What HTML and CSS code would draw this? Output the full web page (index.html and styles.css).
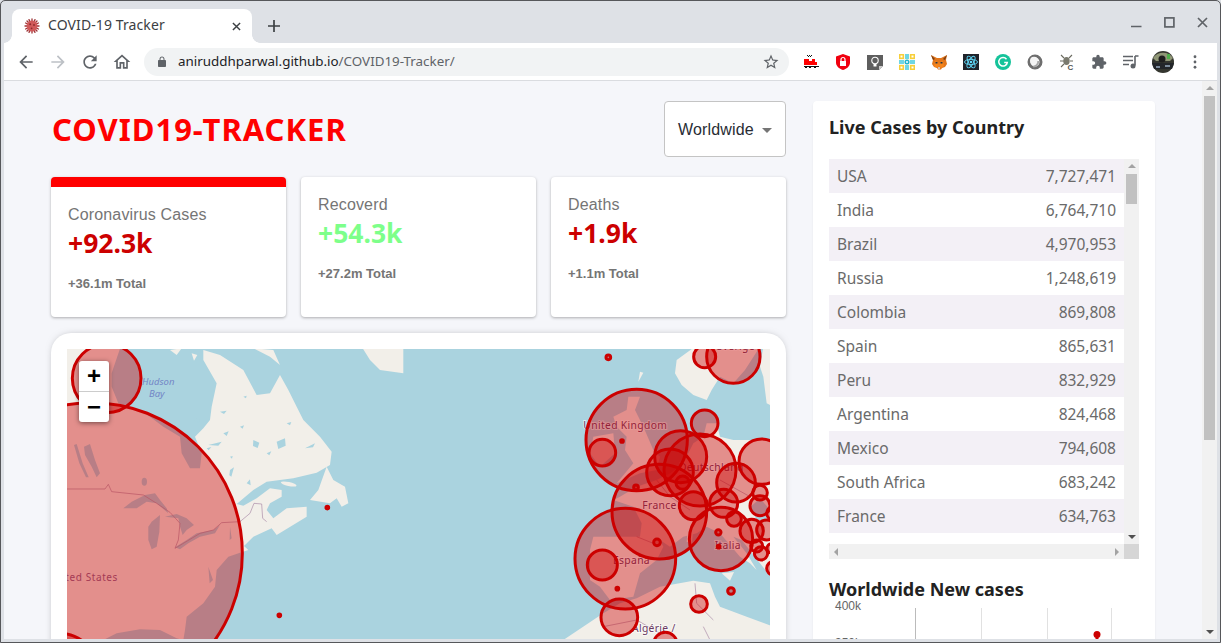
FILE: index.html

```html
<!DOCTYPE html>
<html lang="en">
<head>
  <meta charset="UTF-8">
  <title>COVID-19 Tracker</title>
  <link rel="stylesheet" href="styles.css">
</head>
<body>
<div class="window">

  <div class="tabbar">
    <div class="tab">
      <svg class="favicon" viewBox="0 0 16 16">
        <g stroke="#9c3336" stroke-width="1.3" stroke-linecap="round">
          <path d="M8 1v14M1 8h14M3 3l10 10M13 3L3 13M5 1.600l6 12.800M11 1.600L5 14.400M1.600 5l12.800 6M14.400 5L1.600 11"/>
        </g>
        <circle cx="8" cy="8" r="5.500" fill="#d0595a"/>
        <circle cx="6.200" cy="6.200" r="1" fill="#8c2a2a"/>
        <circle cx="10" cy="7" r=".9" fill="#8c2a2a"/>
        <circle cx="7.600" cy="10.300" r=".9" fill="#8c2a2a"/>
      </svg>
      <span class="tab-title">COVID-19 Tracker</span>
      <svg class="tab-close" viewBox="0 0 10 10"><path d="M1 1l8 8M9 1L1 9" stroke="#3c4043" stroke-width="1.600"/></svg>
    </div>
    <svg class="new-tab" viewBox="0 0 12 12"><path d="M6 0v12M0 6h12" stroke="#3c4043" stroke-width="1.700"/></svg>
    <div class="win-controls">
      <svg viewBox="0 0 11 11"><path d="M0 9.500h10.500" stroke="#5f6368" stroke-width="1.600"/></svg>
      <svg viewBox="0 0 11 11"><rect x=".9" y=".9" width="9" height="9" fill="none" stroke="#5f6368" stroke-width="1.700"/></svg>
      <svg viewBox="0 0 11 11"><path d="M1 1l9 9M10 1l-9 9" stroke="#5f6368" stroke-width="1.700"/></svg>
    </div>
  </div>

  <div class="toolbar">
    <div class="nav-btns">
      <svg viewBox="0 0 24 24" fill="#5f6368"><path d="M20 11H7.830l5.590-5.590L12 4l-8 8 8 8 1.410-1.410L7.830 13H20v-2z"/></svg>
      <svg viewBox="0 0 24 24" fill="#bdc1c6"><path d="M4 11h12.170l-5.590-5.590L12 4l8 8-8 8-1.410-1.410L16.170 13H4v-2z"/></svg>
      <svg viewBox="0 0 24 24" fill="#5f6368"><path d="M17.650 6.350C16.200 4.900 14.210 4 12 4c-4.420 0-7.990 3.580-7.990 8s3.570 8 7.990 8c3.730 0 6.840-2.550 7.730-6h-2.080c-.82 2.330-3.040 4-5.650 4-3.310 0-6-2.690-6-6s2.690-6 6-6c1.660 0 3.140.69 4.220 1.780L13 11h7V4l-2.350 2.350z"/></svg>
      <svg viewBox="0 0 24 24" fill="#5f6368"><path d="M12 5.690l5 4.500V18h-2v-6H9v6H7v-7.810l5-4.500M12 3L2 12h3v8h6v-6h2v6h6v-8h3L12 3z"/></svg>
    </div>
    <div class="omnibox">
      <svg class="lock" viewBox="0 0 24 24" fill="#5f6368"><path d="M18 8h-1V6c0-2.760-2.240-5-5-5S7 3.240 7 6v2H6c-1.100 0-2 .9-2 2v10c0 1.100.9 2 2 2h12c1.100 0 2-.9 2-2V10c0-1.100-.9-2-2-2zM9 6c0-1.660 1.340-3 3-3s3 1.340 3 3v2H9V6z"/></svg>
      <span class="url"><b>aniruddhparwal.github.io</b>/COVID19-Tracker/</span>
      <svg class="star" viewBox="0 0 24 24" fill="#5f6368"><path d="M22 9.240l-7.190-.62L12 2 9.190 8.630 2 9.240l5.460 4.730L5.820 21 12 17.270 18.180 21l-1.630-7.030L22 9.240zM12 15.400l-3.760 2.270 1-4.280-3.320-2.880 4.380-.38L12 6.100l1.710 4.040 4.380.38-3.320 2.880 1 4.280L12 15.400z"/></svg>
    </div>
    <div class="extensions">
      <!-- train -->
      <svg viewBox="0 0 16 16"><path fill="#111" d="M4 1h1v1H4zM6 1h1v1H6zM8 1h1v1H8zM5 2h1v1H5zM7 2h1v1H7z"/><path fill="#f00" d="M1 5h5v2h3V5h3v3h2v3H1z"/><path fill="#111" d="M1 12h15v1H1zM2 13h2v1H2zM6 13h2v1H6zM11 13h2v1h-2z"/></svg>
      <!-- shield -->
      <svg viewBox="0 0 16 16"><path fill="#f0000f" d="M8 0l7 2.400v6C15 12 12 14.600 8 16 4 14.600 1 12 1 8.400v-6z"/><rect x="5" y="7" width="6" height="5" fill="#fff"/><path d="M6 7V5.500a2 2 0 0 1 4 0V7" fill="none" stroke="#fff" stroke-width="1.200"/></svg>
      <!-- bulb -->
      <svg viewBox="0 0 16 16"><path fill="#5e5e5e" d="M0 1h16v11l-4 4H0z"/><circle cx="8" cy="6.500" r="3.200" fill="none" stroke="#fff" stroke-width="1.100"/><path d="M6.500 10h3v2.500h-3z" fill="#fff"/><path d="M12 16v-4h4z" fill="#ccc"/></svg>
      <!-- grid -->
      <svg viewBox="0 0 16 16"><rect width="16" height="16" fill="#fdf8e2"/><path fill="#f7cf3a" d="M0 0h5v5H0zM11 0h5v5h-5zM0 11h5v5H0zM11 11h5v5h-5z"/><path fill="#fff" d="M1.500 1.500h2v2h-2zM12.500 1.500h2v2h-2zM1.500 12.500h2v2h-2zM12.500 12.500h2v2h-2z"/><path fill="#6fd6e4" d="M6 0h4v5H6zM0 6h5v4H0zM11 6h5v4h-5zM6 11h4v5H6z"/><circle cx="8" cy="8" r="2.500" fill="#1fb4cf"/><circle cx="8" cy="8" r="1" fill="#fff"/></svg>
      <!-- fox -->
      <svg viewBox="0 0 16 16"><path fill="#e2761b" d="M0 1l6 3h4l6-3-1 5 1 4-2 3-3 1-1 1.500H7L6 14l-3-1-2-3 1-4z"/><path fill="#f6851b" d="M4 7l3 1 1 4-2 2-3-2zM12 7L9 8l-1 4 2 2 3-2z"/><path fill="#233447" d="M4.500 8h2v1.500h-2zM9.500 8h2v1.500h-2z"/><path fill="#d7c1b3" d="M7 13h2v2H7z"/><path fill="#763d16" d="M0 1l4 4-2 1zM16 1l-4 4 2 1z"/></svg>
      <!-- react -->
      <svg viewBox="0 0 16 16"><rect width="16" height="16" fill="#20232a"/><g fill="none" stroke="#61dafb" stroke-width=".9"><ellipse cx="8" cy="8" rx="6.500" ry="2.600"/><ellipse cx="8" cy="8" rx="6.500" ry="2.600" transform="rotate(60 8 8)"/><ellipse cx="8" cy="8" rx="6.500" ry="2.600" transform="rotate(120 8 8)"/></g><circle cx="8" cy="8" r="1.300" fill="#61dafb"/></svg>
      <!-- grammarly -->
      <svg viewBox="0 0 16 16"><circle cx="8" cy="8" r="8" fill="#15c39a"/><path d="M11.500 5.200A4.300 4.300 0 1 0 12.300 8.500H9.200" fill="none" stroke="#fff" stroke-width="1.500"/></svg>
      <!-- ring -->
      <svg viewBox="0 0 16 16"><circle cx="8" cy="8" r="6" fill="none" stroke="#6e6e6e" stroke-width="3"/><circle cx="7" cy="6.800" r="4" fill="#f4f4f4"/><path d="M11.300 7a5 5 0 0 1-5 5.500" fill="none" stroke="#a8a8a8" stroke-width="2"/></svg>
      <!-- bug -->
      <svg viewBox="0 0 16 16"><g stroke="#6b6b60" stroke-width="1.100" fill="none"><path d="M2 1l3 3M13 1l-3 3M1 7h4M14 7h-3M2 13l3-3"/></g><ellipse cx="7.500" cy="7" rx="3.200" ry="4" fill="#7a7a6e"/><text x="8.500" y="15.500" class="bug-c">C</text></svg>
      <!-- puzzle -->
      <svg viewBox="0 0 24 24" fill="#5f6368"><path d="M20.500 11H19V7c0-1.100-.9-2-2-2h-4V3.500C13 2.120 11.880 1 10.500 1S8 2.120 8 3.500V5H4c-1.100 0-1.990.9-1.990 2v3.800H3.500c1.490 0 2.700 1.210 2.700 2.700s-1.210 2.700-2.700 2.700H2V20c0 1.100.9 2 2 2h3.800v-1.500c0-1.490 1.210-2.700 2.700-2.700 1.490 0 2.700 1.210 2.700 2.700V22H17c1.100 0 2-.9 2-2v-4h1.500c1.380 0 2.500-1.120 2.500-2.500S21.880 11 20.500 11z"/></svg>
      <!-- media queue -->
      <svg viewBox="0 0 16 16"><path d="M0 2.500h10M0 6.500h10M0 10.500h6" stroke="#5f6368" stroke-width="1.400"/><path d="M12 2v9.500" stroke="#5f6368" stroke-width="1.600"/><path d="M12 2h3.500" stroke="#5f6368" stroke-width="1.600"/><circle cx="10" cy="12" r="2.500" fill="#5f6368"/></svg>
      <!-- avatar -->
      <svg class="avatar" viewBox="0 0 22 22"><circle cx="11" cy="11" r="11" fill="#34362f"/><path d="M1 7C5 0 17 0 21 7l-3 3H4z" fill="#8f9676"/><circle cx="10" cy="8" r="3.500" fill="#1e1e1e"/><path d="M0 12h22l-2 6H2z" fill="#23262a"/><path d="M15 3h3v5h-3z" fill="#4fae4a"/><path d="M4 15h4v2H4zM13 14h5v2h-5z" fill="#7c8c9c"/></svg>
      <!-- menu -->
      <svg class="menu" viewBox="0 0 4 16" fill="#5f6368"><circle cx="2" cy="2" r="1.600"/><circle cx="2" cy="8" r="1.600"/><circle cx="2" cy="14" r="1.600"/></svg>
    </div>
  </div>

  <div class="viewport">
    <div class="app">
      <div class="left">
        <div class="header">
          <h1 class="logo">COVID19-TRACKER</h1>
          <div class="dropdown">Worldwide<span class="caret"></span></div>
        </div>

        <div class="stats">
          <div class="stat stat-active">
            <div class="stat-body">
              <p class="stat-title">Coronavirus Cases</p>
              <p class="stat-num">+92.3k</p>
              <p class="stat-total">+36.1m Total</p>
            </div>
          </div>
          <div class="stat">
            <div class="stat-body">
              <p class="stat-title">Recoverd</p>
              <p class="stat-num green">+54.3k</p>
              <p class="stat-total">+27.2m Total</p>
            </div>
          </div>
          <div class="stat">
            <div class="stat-body">
              <p class="stat-title">Deaths</p>
              <p class="stat-num">+1.9k</p>
              <p class="stat-total">+1.1m Total</p>
            </div>
          </div>
        </div>

        <div class="map-card">
          <div class="map">
            <svg class="map-svg" viewBox="67 349 703 300">
              <rect x="67" y="349" width="703" height="300" fill="#aad3df"/>

              <!-- north america, traced from the left half -->
              <g transform="translate(40 340) scale(.33333)">
                <g class="tiles">
                  <path class="land" d="M60 20L242 20L225 70L215 100L215 140L235 190L310 215L370 260L420 290L425 340L450 385L480 385L485 340L465 290L490 265L510 240L515 200L530 130L490 60L490 30L540 45L610 90L650 165L690 160L720 105L745 150L770 200L790 240L840 290L875 335L870 375L830 398L760 415L680 425L640 450L590 492L610 497L650 475L690 445L725 450L725 470L690 490L680 510L700 535L740 505L800 500L800 530L710 585L695 565L640 590L612 618L625 630L600 638L565 650L530 690L525 740L490 790L440 830L435 870L430 900L410 895L360 870L300 868L230 880L190 900L60 900Z"/>
                  <path class="land" d="M810 480L835 450L860 380L880 420L915 440L925 490L905 500L890 475L870 490Z"/>
                  <path class="land" d="M965 20L1090 20L1090 100L1020 90L990 60Z"/>
                  <path class="land" d="M390 30L425 25L410 45ZM455 40L472 45L462 62ZM640 25L700 30L720 75L690 50Z"/>
                  <ellipse class="land" cx="746" cy="432" rx="24" ry="6" transform="rotate(12 746 432)"/>
                  <g class="lake">
                    <path d="M250 505L275 485L315 465L345 460L360 480L380 505L385 520L350 490L320 485L290 505Z"/>
                    <path d="M335 545L360 525L358 575L350 620L335 628L325 600L325 560Z"/>
                    <path d="M375 530L410 522L440 535L462 555L440 570L428 585L420 560L415 535Z"/>
                    <path d="M405 622L440 600L470 580L520 570L540 555L525 580L480 590L445 610L420 628Z"/>
                    <path d="M132 320L150 312L165 360L180 400L170 412L155 380L135 345Z"/>
                    <path d="M102 315L110 312L128 370L146 412L138 412L118 370Z"/>
                    <ellipse cx="313" cy="425" rx="8" ry="12"/>
                    <path d="M640 300l18 8-5 16-14-6zM710 305l25-10 2 22-22 10zM505 315l40-10-10 12zM795 325l30-15-6 12zM570 390l12-8-8 28-6-4zM540 215l20-3-8 10zM462 240l14-10 6 22zM620 430l10-12 2 18zM550 280l16-6-6 14zM500 325l14-4-8 10zM600 260l12-4-4 10zM680 340l14-6-6 12zM740 250l14-4-4 10zM610 170l10-3-2 8zM570 350l8-2-2 8z"/>
                    <path d="M505 680l14 40-10 10zM570 560l5 35-6 5z"/>
                  </g>
                </g>
                <path class="border" d="M60 447L195 447L205 433L215 455L310 465L350 490L390 517L420 550L415 600L405 625L480 580L520 570L545 548L600 545L630 520L642 490L665 492L668 535L680 545"/>
                <circle class="case" cx="200" cy="115" r="103"/>
                <circle class="case" cx="155" cy="640" r="452"/>
                <circle class="case" cx="60" cy="990" r="110"/>
                <circle class="case" cx="862" cy="503" r="4"/>
                <circle class="case" cx="718" cy="826" r="4"/>
              </g>

              <!-- europe and africa, traced from the right half -->
              <g transform="translate(560 340) scale(.33333)">
                <g class="tiles">
                  <path class="land" d="M405 20L350 60L345 100L365 135L400 165L440 180L455 150L480 110L520 130L555 90L600 20Z"/>
                  <path class="land" d="M610 20L640 20L640 200L620 190L610 110L600 80Z"/>
                  <path class="land" d="M240 95L250 98L235 125Z"/>
                  <path class="land" d="M205 170L240 170L225 210L250 260L280 330L300 350L290 390L240 400L170 430L220 370L195 330L200 290L170 260L160 230L200 210Z"/>
                  <path class="land" d="M100 290L160 280L165 340L120 380L90 340Z"/>
                  <path class="land" d="M640 300L520 300L480 290L470 250L440 250L430 290L400 310L370 370L330 400L290 420L230 440L180 470L160 480L220 500L245 550L240 590L100 590L90 630L90 720L120 740L150 780L220 770L240 700L290 660L310 620L300 600L330 620L370 590L410 580L440 560L480 580L540 650L570 670L590 690L560 640L520 590L545 600L600 670L640 720Z"/>
                  <path class="land" d="M485 700L522 696L510 722Z"/>
                  <path class="land" d="M384 560L400 565L396 610L380 605Z"/>
                  <path class="land" d="M10 900L130 820L180 790L230 775L300 740L400 722L450 730L465 770L480 800L560 830L640 860L640 900Z"/>
                  <path class="water" d="M572 500L600 475L622 500L620 545L590 540Z"/>
                </g>
                <path class="border" d="M405 730L410 790L460 840M230 840L300 880M430 860L450 900M130 860L230 840M230 590L280 610M290 420L330 470L390 510M480 420L570 470"/>
                <text class="place" x="70" y="268">United Kingdom</text>
                <text class="place" x="247" y="507">France</text>
                <text class="place" x="357" y="393">Deutschland</text>
                <text class="place" x="159" y="672">España</text>
                <text class="place" x="464" y="628">Italia</text>
                <text class="place" x="216" y="875">Algérie /</text>
                <text class="place" x="470" y="30">Sverige</text>
                <circle class="case" cx="230" cy="300" r="152"/>
                <circle class="case" cx="127" cy="338" r="40"/>
                <circle class="case" cx="186" cy="303" r="4"/>
                <circle class="case" cx="145" cy="52" r="7"/>
                <circle class="case" cx="434" cy="50" r="33"/>
                <circle class="case" cx="520" cy="50" r="80"/>
                <circle class="case" cx="434" cy="250" r="40"/>
                <circle class="case" cx="362" cy="350" r="78"/>
                <circle class="case" cx="330" cy="397" r="70"/>
                <circle class="case" cx="420" cy="390" r="108"/>
                <circle class="case" cx="298" cy="515" r="142"/>
                <circle class="case" cx="228" cy="442" r="7"/>
                <circle class="case" cx="368" cy="428" r="20"/>
                <circle class="case" cx="400" cy="497" r="42"/>
                <circle class="case" cx="491" cy="490" r="42"/>
                <circle class="case" cx="528" cy="428" r="58"/>
                <circle class="case" cx="605" cy="365" r="68"/>
                <circle class="case" cx="600" cy="458" r="22"/>
                <circle class="case" cx="600" cy="497" r="30"/>
                <circle class="case" cx="522" cy="537" r="22"/>
                <circle class="case" cx="575" cy="573" r="35"/>
                <circle class="case" cx="620" cy="570" r="30"/>
                <circle class="case" cx="640" cy="520" r="20"/>
                <circle class="case" cx="483" cy="597" r="95"/>
                <circle class="case" cx="475" cy="577" r="8"/>
                <circle class="case" cx="476" cy="620" r="4"/>
                <circle class="case" cx="196" cy="656" r="151"/>
                <circle class="case" cx="127" cy="675" r="45"/>
                <circle class="case" cx="291" cy="607" r="10"/>
                <circle class="case" cx="172" cy="746" r="4"/>
                <circle class="case" cx="178" cy="832" r="55"/>
                <circle class="case" cx="417" cy="792" r="25"/>
                <circle class="case" cx="513" cy="753" r="10"/>
                <circle class="case" cx="316" cy="912" r="35"/>
                <circle class="case" cx="603" cy="640" r="20"/>
                <circle class="case" cx="640" cy="685" r="20"/>
                <circle class="case" cx="590" cy="618" r="18"/>
                <circle class="case" cx="635" cy="625" r="14"/>
              </g>

              <text class="water-label" x="142" y="385">Hudson</text>
              <text class="water-label" x="149" y="397">Bay</text>
              <text class="place-tint" x="118" y="581" text-anchor="end">United States</text>
            </svg>
            <div class="zoom-ctrl">
              <div class="zoom-btn">+</div>
              <div class="zoom-btn">−</div>
            </div>
          </div>
        </div>
      </div>

      <div class="right">
        <h3 class="side-title">Live Cases by Country</h3>
        <div class="table-box">
          <div class="table-scroll">
            <table class="cases">
              <tr><td>USA</td><td>7,727,471</td></tr>
              <tr><td>India</td><td>6,764,710</td></tr>
              <tr><td>Brazil</td><td>4,970,953</td></tr>
              <tr><td>Russia</td><td>1,248,619</td></tr>
              <tr><td>Colombia</td><td>869,808</td></tr>
              <tr><td>Spain</td><td>865,631</td></tr>
              <tr><td>Peru</td><td>832,929</td></tr>
              <tr><td>Argentina</td><td>824,468</td></tr>
              <tr><td>Mexico</td><td>794,608</td></tr>
              <tr><td>South Africa</td><td>683,242</td></tr>
              <tr><td>France</td><td>634,763</td></tr>
            </table>
          </div>
          <div class="vbar">
            <span class="arrow arrow-up"></span>
            <span class="thumb"></span>
            <span class="arrow arrow-down"></span>
          </div>
          <div class="hbar">
            <span class="arrow arrow-left"></span>
            <span class="arrow arrow-right"></span>
          </div>
          <div class="corner"></div>
        </div>

        <h3 class="side-title chart-title">Worldwide New cases</h3>
        <svg class="chart" viewBox="0 0 310 50">
          <path d="M86.500 8V50" stroke="#bbb"/>
          <path d="M152.500 8V50M218.500 8V50M282.500 8V50" stroke="#e1e1e1"/>
          <text class="tick" x="6" y="7">400k</text>
          <text class="tick" x="6" y="44">350k</text>
          <path d="M268 33v12" stroke="#cc0000" stroke-width="3"/>
          <circle cx="268" cy="34.500" r="3.500" fill="#cc0000"/>
        </svg>
      </div>
    </div>

    <div class="page-scroll">
      <span class="arrow arrow-up"></span>
      <span class="page-thumb"></span>
      <span class="arrow arrow-down"></span>
    </div>
  </div>

</div>
</body>
</html>
```

FILE: styles.css

```css
* {
  box-sizing: border-box;
}
html, body {
  margin: 0;
  height: 100%;
  overflow: hidden;
}
body {
  font-family: "Liberation Sans", sans-serif;
  background: #dee1e6;
}
p, h1, h3 {
  margin: 0;
}

/* browser chrome */
.window {
  height: 643px;
  display: flex;
  flex-direction: column;
  background: #dee1e6;
  border: 1px solid #56575a;
  border-radius: 5px 5px 0 0;
  padding: 0 3px 3px;
  overflow: hidden;
}
.tabbar {
  height: 42px;
  flex: none;
  display: flex;
  align-items: flex-end;
  padding-left: 8px;
}
.tab {
  position: relative;
  width: 240px;
  height: 34px;
  background: #fff;
  border-radius: 8px 8px 0 0;
  display: flex;
  align-items: center;
  padding: 0 11px 0 12px;
}
.tab::before, .tab::after {
  content: "";
  position: absolute;
  bottom: 0;
  width: 8px;
  height: 8px;
}
.tab::before {
  left: -8px;
  background: radial-gradient(circle at 0 0, transparent 7.5px, #fff 8px);
}
.tab::after {
  right: -8px;
  background: radial-gradient(circle at 100% 0, transparent 7.5px, #fff 8px);
}
.favicon {
  width: 16px;
  height: 16px;
}
.tab-title {
  font-family: "Noto Sans", sans-serif;
  font-size: 14px;
  line-height: 18px;
  letter-spacing: .1px;
  color: #3c4043;
  margin: -2px 0 0 8px;
  flex: 1;
}
.tab-close {
  width: 9px;
  height: 9px;
}
.new-tab {
  width: 12px;
  height: 12px;
  margin: 0 0 11px 16px;
}
.win-controls {
  margin-left: auto;
  margin-top: 16px;
  padding-right: 9px;
  display: flex;
  gap: 22px;
  align-self: flex-start;
}
.win-controls svg {
  width: 11px;
  height: 11px;
}
.toolbar {
  height: 38px;
  flex: none;
  background: #fff;
  border-bottom: 1px solid #dadce0;
  display: flex;
  align-items: center;
}
.nav-btns {
  display: flex;
  gap: 12px;
  padding-left: 12px;
  width: 140px;
}
.nav-btns svg {
  width: 20px;
  height: 20px;
}
.omnibox {
  width: 645px;
  height: 28px;
  background: #f1f3f4;
  border-radius: 14px;
  display: flex;
  align-items: center;
  padding: 0 9px 0 12px;
}
.lock {
  width: 12px;
  height: 12px;
}
.url {
  font-family: "Noto Sans", sans-serif;
  font-size: 13.400px;
  line-height: 18px;
  color: #5f6368;
  margin: -2px 0 0 10px;
  flex: 1;
}
.url b {
  font-weight: 400;
  color: #202124;
}
.star {
  width: 18px;
  height: 18px;
}
.extensions {
  display: flex;
  align-items: center;
  gap: 16px;
  padding-left: 14px;
}
.extensions svg {
  width: 16px;
  height: 16px;
  display: block;
}
.bug-c {
  font-family: "Liberation Sans", sans-serif;
  font-size: 8px;
  font-weight: 700;
  fill: #555;
}
.extensions .avatar {
  width: 22px;
  height: 22px;
  margin: 0 -3px;
}
.extensions .menu {
  width: 4px;
  height: 14px;
  margin-left: 6px;
}

/* page */
.viewport {
  flex: 1;
  min-height: 0;
  display: flex;
  background: #f5f6fa;
  overflow: hidden;
}
.app {
  flex: 1;
  min-width: 0;
  display: flex;
  gap: 27px;
  padding: 20px 47px 0;
  overflow: hidden;
}
.left {
  width: 735px;
  flex: none;
}
.header {
  display: flex;
  justify-content: space-between;
  align-items: center;
  height: 56px;
  margin-bottom: 20px;
}
.logo {
  font-family: "Noto Sans", sans-serif;
  font-size: 31px;
  font-weight: 700;
  letter-spacing: 1px;
  color: #ff0000;
  margin-left: 1px;
}
.dropdown {
  width: 122px;
  height: 56px;
  background: #fff;
  border: 1px solid #c4c4c4;
  border-radius: 4px;
  display: flex;
  align-items: center;
  padding: 2px 0 0 13px;
  font-size: 16px;
  letter-spacing: .15px;
  color: #282c34;
}
.caret {
  width: 0;
  height: 0;
  margin-left: 8px;
  border-left: 5px solid transparent;
  border-right: 5px solid transparent;
  border-top: 5px solid #757575;
}
.stats {
  display: flex;
  gap: 15px;
  margin-bottom: 16px;
}
.stat {
  flex: 1;
  height: 140px;
  background: #fff;
  border-radius: 4px;
  box-shadow: 0 1px 3px rgba(0,0,0,0.3);
  overflow: hidden;
}
.stat-active {
  border-top: 10px solid #ff0000;
}
.stat-body {
  padding: 18px 16px 0 17px;
}
.stat-title {
  font-size: 16px;
  line-height: 20px;
  letter-spacing: .15px;
  color: #757575;
}
.stat-num {
  font-family: "Noto Sans", sans-serif;
  font-size: 26.500px;
  font-weight: 700;
  line-height: 37px;
  color: #cc0000;
}
.stat-num.green {
  color: #7dff8a;
}
.stat-total {
  font-size: 13px;
  font-weight: 700;
  color: #757575;
  margin-top: 14px;
}
.map-card {
  background: #fff;
  border-radius: 20px;
  padding: 16px;
  height: 400px;
  box-shadow: 0 0 8px -4px rgba(0,0,0,0.5);
}
.map {
  position: relative;
  height: 300px;
}
.map-svg {
  display: block;
  width: 703px;
  height: 300px;
}
.tiles {
  filter: blur(1px);
}
.land {
  fill: #f2efe9;
}
.lake, .water {
  fill: #aad3df;
}
.border {
  fill: none;
  stroke: #a98aa6;
  stroke-width: 2;
}
.case {
  fill: #cc0000;
  fill-opacity: .4;
  stroke: #cc0000;
  stroke-width: 9;
}
.place {
  font-family: "Noto Sans", sans-serif;
  font-size: 31px;
  letter-spacing: 1px;
  fill: #6b3a63;
  stroke: rgba(255,255,255,0.6);
  stroke-width: 6;
  paint-order: stroke;
}
.water-label {
  font-family: "Noto Sans", sans-serif;
  font-size: 9.500px;
  font-style: italic;
  fill: #7386c6;
}
.place-tint {
  font-family: "Noto Sans", sans-serif;
  font-size: 10px;
  letter-spacing: .6px;
  fill: #a33a55;
}
.zoom-ctrl {
  position: absolute;
  top: 12px;
  left: 12px;
  width: 30px;
  background: #fff;
  border-radius: 3px;
  box-shadow: 0 1px 5px rgba(0,0,0,0.5);
}
.zoom-btn {
  height: 30px;
  line-height: 30px;
  text-align: center;
  font-size: 24px;
  font-weight: 700;
  color: #000;
}
.zoom-btn + .zoom-btn {
  height: 31px;
  border-top: 1px solid #ccc;
}

/* sidebar */
.right {
  width: 342px;
  flex: none;
  height: 620px;
  background: #fff;
  border-radius: 4px;
  padding: 16px;
  box-shadow: 0 1px 2px rgba(0,0,0,0.08);
}
.side-title {
  font-family: "Noto Sans", sans-serif;
  font-size: 18px;
  font-weight: 700;
  line-height: 20px;
  color: #222;
}
.table-box {
  margin-top: 22px;
  height: 400px;
  display: grid;
  grid-template-columns: 295px 15px;
  grid-template-rows: 385px 15px;
}
.table-scroll {
  overflow: hidden;
}
.cases {
  width: 100%;
  border-collapse: collapse;
  font-family: "Noto Sans", sans-serif;
  font-size: 15.500px;
  color: #6a6a6a;
}
.cases td {
  height: 34px;
  padding: 0 8px;
}
.cases td:last-child {
  text-align: right;
}
.cases tr:nth-child(odd) {
  background: #f3f0f6;
}
.vbar {
  background: #f1f1f1;
  display: flex;
  flex-direction: column;
  align-items: center;
  padding-top: 5px;
}
.thumb {
  width: 11px;
  height: 30px;
  margin-top: 6px;
  background: #c1c1c1;
}
.hbar {
  background: #f1f1f1;
  display: flex;
  justify-content: space-between;
  align-items: center;
  padding: 0 5px;
}
.corner {
  background: #d6d6d6;
}
.arrow {
  width: 0;
  height: 0;
  display: block;
  border: 4px solid transparent;
}
.arrow-up {
  border-top: 0;
  border-bottom: 4px solid #a3a3a3;
}
.arrow-down {
  border-bottom: 0;
  border-top: 4px solid #505050;
  margin-top: auto;
  margin-bottom: 5px;
}
.arrow-left {
  border-left: 0;
  border-right: 4px solid #a3a3a3;
}
.arrow-right {
  border-right: 0;
  border-left: 4px solid #a3a3a3;
}
.chart-title {
  margin-top: 20px;
}
.chart {
  display: block;
  width: 310px;
  height: 50px;
  margin-top: 1px;
}
.tick {
  font-size: 12px;
  fill: #666;
  dominant-baseline: middle;
}
.page-scroll {
  width: 15px;
  flex: none;
  background: #f1f1f1;
  display: flex;
  flex-direction: column;
  align-items: center;
  padding-top: 5px;
}
.page-thumb {
  width: 11px;
  height: 344px;
  margin-top: 6px;
  background: #c1c1c1;
}
```
